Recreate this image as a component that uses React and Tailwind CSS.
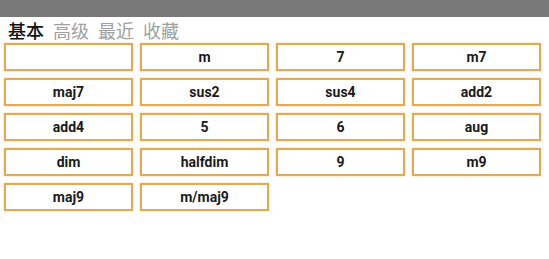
import React from "react";

const chords = ["", "m", "7", "m7", "maj7", "sus2", "sus4", "add2", "add4", "5", "6", "aug", "dim", "halfdim", "9", "m9", "maj9", "m/maj9"];

export default function App() {
  return (
    <div className="w-[549px] h-[259px] bg-white overflow-hidden" style={{ fontFamily: "Roboto, 'Noto Sans CJK SC', sans-serif" }}>
      <div className="h-[17px] bg-[#787878]" />
      <div className="h-[26px] flex items-center gap-[9px] pl-[8px] text-[18px] leading-none" style={{ fontFamily: "'Noto Sans CJK SC', sans-serif" }}>
        <span className="text-[#111] font-medium">基本</span>
        <span className="text-[#a0a0a0]">高级</span>
        <span className="text-[#a0a0a0]">最近</span>
        <span className="text-[#a0a0a0]">收藏</span>
      </div>
      <div className="grid grid-cols-4 gap-x-[7px] gap-y-[7px] pl-[4px] pr-[8px]">
        {chords.map((c, i) => (
          <div
            key={i}
            className="h-[28px] border-[2.5px] border-[#e2aa55] shadow-[0_0_1.5px_#f3c57a] flex items-center justify-center text-[14px] font-bold text-[#1a1a1a]"
          >
            {c}
          </div>
        ))}
      </div>
    </div>
  );
}
